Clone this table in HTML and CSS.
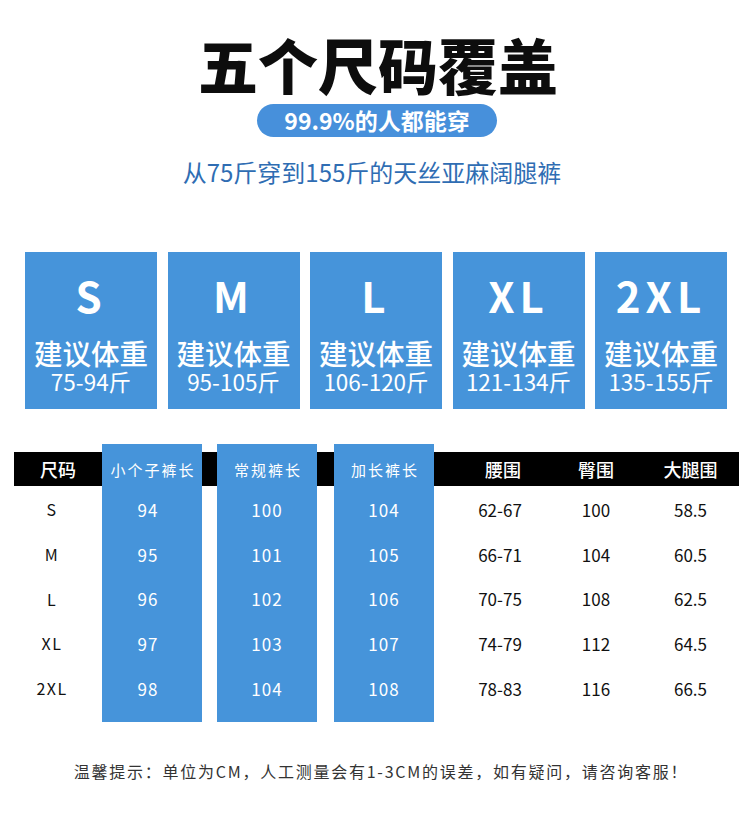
FILE: index.html
```html
<!DOCTYPE html>
<html lang="zh-CN">
<head>
<meta charset="utf-8">
<title>五个尺码覆盖</title>
<link rel="stylesheet" href="styles.css">
</head>
<body>
<div class="page">
  <header class="head">
    <h1 class="title">五个尺码覆盖</h1>
    <div class="pill">99.9%的人都能穿</div>
    <p class="sub">从75斤穿到155斤的天丝亚麻阔腿裤</p>
  </header>

  <section class="cards">
    <div class="card"><div class="size">S</div><div class="lbl">建议体重</div><div class="wt">75-94斤</div></div>
    <div class="card"><div class="size">M</div><div class="lbl">建议体重</div><div class="wt">95-105斤</div></div>
    <div class="card"><div class="size">L</div><div class="lbl">建议体重</div><div class="wt">106-120斤</div></div>
    <div class="card"><div class="size">XL</div><div class="lbl">建议体重</div><div class="wt">121-134斤</div></div>
    <div class="card"><div class="size">2XL</div><div class="lbl">建议体重</div><div class="wt">135-155斤</div></div>
  </section>

  <section class="table">
    <div class="col c0">
      <div class="th big">尺码</div>
      <div class="td">S</div><div class="td">M</div><div class="td">L</div><div class="td">XL</div><div class="td">2XL</div>
    </div>
    <div class="col blue b1">
      <div class="th small">小个子裤长</div>
      <div class="td">94</div><div class="td">95</div><div class="td">96</div><div class="td">97</div><div class="td">98</div>
    </div>
    <div class="col sp s1"><div class="th"></div></div>
    <div class="col blue">
      <div class="th small">常规裤长</div>
      <div class="td">100</div><div class="td">101</div><div class="td">102</div><div class="td">103</div><div class="td">104</div>
    </div>
    <div class="col sp s2"><div class="th"></div></div>
    <div class="col blue">
      <div class="th small">加长裤长</div>
      <div class="td">104</div><div class="td">105</div><div class="td">106</div><div class="td">107</div><div class="td">108</div>
    </div>
    <div class="col c4">
      <div class="th big">腰围</div>
      <div class="td">62-67</div><div class="td">66-71</div><div class="td">70-75</div><div class="td">74-79</div><div class="td">78-83</div>
    </div>
    <div class="col c5">
      <div class="th big">臀围</div>
      <div class="td">100</div><div class="td">104</div><div class="td">108</div><div class="td">112</div><div class="td">116</div>
    </div>
    <div class="col c6">
      <div class="th big">大腿围</div>
      <div class="td">58.5</div><div class="td">60.5</div><div class="td">62.5</div><div class="td">64.5</div><div class="td">66.5</div>
    </div>
  </section>

  <p class="note">温馨提示：单位为CM，人工测量会有1-3CM的误差，如有疑问，请咨询客服！</p>
</div>
</body>
</html>
```

FILE: styles.css
```css
* { box-sizing: border-box; }
html, body { margin: 0; padding: 0; background: #fff; }
body {
  width: 750px;
  font-family: "Noto Sans CJK SC", "Noto Sans", sans-serif;
  color: #111;
}
.page { width: 750px; }

.head { display: flex; flex-direction: column; align-items: center; }
.title {
  margin: 34px 0 0 6px;
  font-size: 60px;
  line-height: 60px;
  font-weight: 900;
  color: #0d0d0d;
  letter-spacing: 0;
}
.pill {
  margin: 10px 0 0 4px;
  width: 240px;
  height: 33px;
  border-radius: 17px;
  background: #4790db;
  color: #fff;
  font-size: 23px;
  font-weight: 700;
  line-height: 33px;
  text-align: center;
}
.sub {
  margin: 20px 0 0 0;
  font-size: 24px;
  line-height: 30px;
  color: #2f6db3;
  padding-right: 6px;
}

.cards {
  margin: 65px 0 0 25px;
  width: 702px;
  display: grid;
  grid-template-columns: repeat(5, 1fr);
  column-gap: 10.5px;
}
.card {
  height: 157px;
  background: #4694da;
  color: #fff;
  text-align: center;
  padding-top: 15px;
}
.size {
  font-size: 42px;
  line-height: 56px;
  font-weight: 700;
  letter-spacing: 5px;
}
.lbl {
  margin-top: 15px;
  font-size: 28.5px;
  line-height: 30px;
  font-weight: 500;
}
.wt {
  font-size: 22.5px;
  line-height: 26px;
  font-weight: 400;
}

.table {
  margin: 35px 0 0 14px;
  width: 725px;
  display: flex;
}
.col { display: flex; flex-direction: column; padding-top: 8px; }
.th {
  height: 34px;
  background: #000;
  color: #fff;
  display: flex;
  align-items: center;
  justify-content: center;
}
.td {
  height: 44.7px;
  display: flex;
  align-items: center;
  justify-content: center;
  font-size: 17px;
  color: #111;
}
.th + .td { margin-top: 1px; }
.big { font-size: 18px; font-weight: 500; }
.small { font-size: 15px; letter-spacing: 2px; padding-left: 2px; }

.c0 { width: 88px; }
.c0 .td { font-size: 16px; letter-spacing: 1.5px; padding-right: 12px; }
.blue {
  width: 100px;
  background: #4694da;
  padding-bottom: 12px;
}
.blue .th { background: transparent; }
.blue .td { color: #fff; font-size: 17px; letter-spacing: 1px; }
.b1 .td { padding-right: 8px; }
.s1 { width: 15px; }
.s2 { width: 17px; }
.c4 { width: 140px; }
.c4 .th { padding-right: 2px; }
.c4 .td { padding-right: 8px; }
.c5 { width: 44px; }
.c6 { width: 121px; }
.c6 .th, .c6 .td { padding-left: 24px; }

.note {
  margin: 37px 0 0 0;
  text-align: center;
  font-size: 16px;
  line-height: 24px;
  letter-spacing: 1.75px;
  color: #333;
  padding-left: 12px;
}
```
